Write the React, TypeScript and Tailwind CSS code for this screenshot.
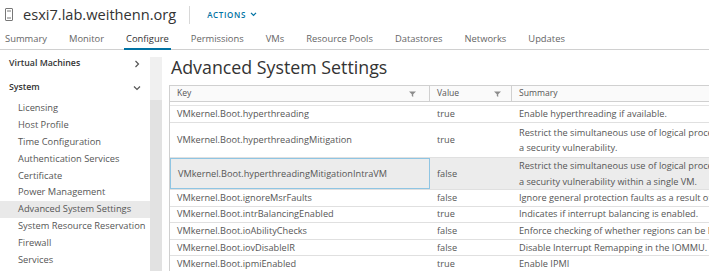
const tabs = [
  "Summary",
  "Monitor",
  "Configure",
  "Permissions",
  "VMs",
  "Resource Pools",
  "Datastores",
  "Networks",
  "Updates",
];

const sideItems = [
  "Licensing",
  "Host Profile",
  "Time Configuration",
  "Authentication Services",
  "Certificate",
  "Power Management",
  "Advanced System Settings",
  "System Resource Reservation",
  "Firewall",
  "Services",
];

const simpleRows = [
  { key: "VMkernel.Boot.ignoreMsrFaults", value: "false", summary: "Ignore general protection faults as a result of rdmsr instructions" },
  { key: "VMkernel.Boot.intrBalancingEnabled", value: "true", summary: "Indicates if interrupt balancing is enabled." },
  { key: "VMkernel.Boot.ioAbilityChecks", value: "false", summary: "Enforce checking of whether regions can be DMA mapped" },
  { key: "VMkernel.Boot.iovDisableIR", value: "false", summary: "Disable Interrupt Remapping in the IOMMU." },
  { key: "VMkernel.Boot.ipmiEnabled", value: "true", summary: "Enable IPMI" },
];

function Funnel() {
  return (
    <svg width="7" height="6" viewBox="0 0 7 6" className="shrink-0">
      <path d="M0 0.5h7L4.2 3.2V6L2.8 5V3.2Z" fill="#8c8c8c" />
    </svg>
  );
}

function Chevron({ down }: { down?: boolean }) {
  return (
    <svg width="8" height="8" viewBox="0 0 8 8" fill="none" stroke="#555" strokeWidth="1.2">
      {down ? <path d="M1 2.5l3 3 3-3" /> : <path d="M2.5 1l3 3-3 3" />}
    </svg>
  );
}

export default function App() {
  return (
    <div
      className="w-[709px] h-[271px] overflow-hidden bg-white text-[#565656]"
      style={{ fontFamily: '"Open Sans", "Liberation Sans", sans-serif' }}
    >
      {/* object header */}
      <div className="flex items-center h-[29px] pl-[5px]">
        <svg width="8" height="13" viewBox="0 0 8 13" fill="none" stroke="#777" strokeWidth="1">
          <rect x="0.5" y="0.5" width="7" height="12" rx="0.5" />
          <path d="M2 3h4M2 10h4" />
        </svg>
        <span className="ml-[10px] text-[14.6px] leading-none text-[#333]">esxi7.lab.weithenn.org</span>
        <span className="ml-[13px] w-px h-[18px] bg-[#d8d8d8]" />
        <span className="ml-[17px] flex items-center gap-[4px] text-[8px] font-semibold tracking-[0.08em] text-[#0072a3]">
          ACTIONS
          <svg width="7" height="5" viewBox="0 0 8 6" fill="none" stroke="#0072a3" strokeWidth="1.5">
            <path d="M1 1l3 3 3-3" />
          </svg>
        </span>
      </div>

      {/* tabs */}
      <div className="flex h-[21px] pl-[5px] pt-[1px] gap-[22px] border-b border-[#d0d0d0] text-[9.4px]">
        {tabs.map((t) =>
          t === "Configure" ? (
            <div key={t} className="relative flex items-center text-[#333]">
              {t}
              <div className="absolute left-[-2px] right-[-2px] bottom-[-1px] h-[2px] bg-[#0072a3]" />
            </div>
          ) : (
            <div key={t} className="flex items-center text-[#666]">
              {t}
            </div>
          )
        )}
      </div>

      <div className="flex h-[221px]">
        {/* sidebar */}
        <div className="w-[150px] shrink-0 pt-[2px] text-[9.3px] whitespace-nowrap">
          <div className="flex items-center justify-between h-[24px] pl-[9px] pr-[9px] text-[8.8px] font-semibold text-[#333]">
            Virtual Machines
            <Chevron />
          </div>
          <div className="flex items-center justify-between h-[24px] pl-[9px] pr-[9px] text-[8.8px] font-semibold text-[#333]">
            System
            <Chevron down />
          </div>
          {sideItems.map((s) => (
            <div
              key={s}
              className={
                "flex items-center h-[16.8px] pl-[18px] text-[#565656] " +
                (s === "Advanced System Settings" ? "bg-[#e9e9e9]" : "")
              }
            >
              {s}
            </div>
          ))}
        </div>

        {/* scrollbar */}
        <div className="w-[12px] shrink-0 flex flex-col mt-[7px] bg-[#f0f0f0]">
          <div className="h-[43px]" />
          <div className="flex-1 bg-[#e2e2e2]" />
        </div>

        {/* main */}
        <div className="flex-1 pl-[7px] min-w-0">
          <div className="h-[35px] flex items-center pl-[2px] text-[17.8px] text-[#333] whitespace-nowrap">
            Advanced System Settings
          </div>
          <div className="w-[700px] border-l border-t border-[#d0d0d0] text-[9.2px] whitespace-nowrap">
            {/* header */}
            <div className="flex h-[16px] border-b border-[#d0d0d0] bg-[#fafafa] text-[8.6px] text-[#565656]">
              <div className="w-[260px] shrink-0 flex items-center justify-between pl-[7px] pr-[13px] border-r border-[#d0d0d0]">
                Key
                <Funnel />
              </div>
              <div className="w-[82px] shrink-0 flex items-center justify-between pl-[7px] pr-[10px] border-r border-[#d0d0d0]">
                Value
                <Funnel />
              </div>
              <div className="flex-1 flex items-center pl-[7px]">Summary</div>
            </div>
            <div className="h-[4px] border-b border-[#e4e4e4]" />

            <div className="flex h-[17px] items-center border-b border-[#e0e0e0]">
              <div className="w-[260px] shrink-0 pl-[7px]">VMkernel.Boot.hyperthreading</div>
              <div className="w-[82px] shrink-0 pl-[7px]">true</div>
              <div className="flex-1 pl-[7px]">Enable hyperthreading if available.</div>
            </div>

            <div className="flex h-[35px] items-center border-b border-[#e0e0e0]">
              <div className="w-[260px] shrink-0 pl-[7px]">VMkernel.Boot.hyperthreadingMitigation</div>
              <div className="w-[82px] shrink-0 pl-[7px]">true</div>
              <div className="flex-1 pl-[7px] leading-[15px]">
                Restrict the simultaneous use of logical processors within a core as necessary to mitigate
                <br />a security vulnerability.
              </div>
            </div>

            <div className="flex h-[32px] items-stretch border-b border-[#e0e0e0] bg-[#ececec]">
              <div className="w-[260px] shrink-0 pl-[7px] flex items-center border border-[#8fc5e3]">
                VMkernel.Boot.hyperthreadingMitigationIntraVM
              </div>
              <div className="w-[82px] shrink-0 pl-[7px] flex items-center">false</div>
              <div className="flex-1 pl-[7px] leading-[16px] flex flex-col justify-center">
                <span>Restrict the simultaneous use of logical processors within a core as necessary to mitigate</span>
                <span>a security vulnerability within a single VM.</span>
              </div>
            </div>

            {simpleRows.map((r) => (
              <div key={r.key} className="flex h-[16.6px] items-center border-b border-[#e0e0e0]">
                <div className="w-[260px] shrink-0 pl-[7px]">{r.key}</div>
                <div className="w-[82px] shrink-0 pl-[7px]">{r.value}</div>
                <div className="flex-1 pl-[7px]">{r.summary}</div>
              </div>
            ))}
          </div>
        </div>
      </div>
    </div>
  );
}
